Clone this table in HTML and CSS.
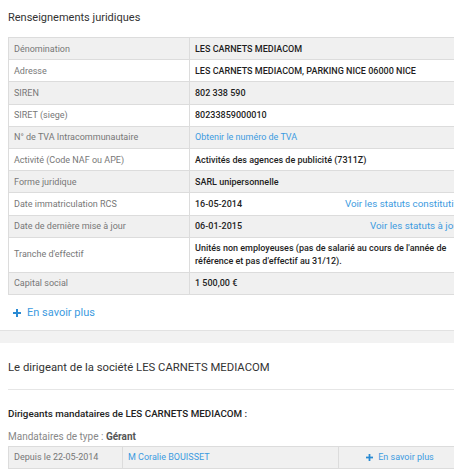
FILE: index.html
```html
<!DOCTYPE html>
<html lang="fr">
<head>
<meta charset="utf-8">
<title>Renseignements juridiques</title>
<link rel="stylesheet" href="styles.css">
</head>
<body>
<div class="page">
  <section class="block">
    <h2 class="title">Renseignements juridiques</h2>
    <table class="info">
      <tr><td class="lab">Dénomination</td><td class="val">LES CARNETS MEDIACOM</td></tr>
      <tr><td class="lab">Adresse</td><td class="val">LES CARNETS MEDIACOM, PARKING NICE 06000 NICE</td></tr>
      <tr><td class="lab">SIREN</td><td class="val">802 338 590</td></tr>
      <tr><td class="lab">SIRET (siege)</td><td class="val">80233859000010</td></tr>
      <tr><td class="lab">N° de TVA Intracommunautaire</td><td class="val"><a class="link">Obtenir le numéro de TVA</a></td></tr>
      <tr><td class="lab">Activité (Code NAF ou APE)</td><td class="val">Activités des agences de publicité (7311Z)</td></tr>
      <tr><td class="lab">Forme juridique</td><td class="val">SARL unipersonnelle</td></tr>
      <tr><td class="lab">Date immatriculation RCS</td><td class="val"><div class="split"><span>16-05-2014</span><a class="link doc">Voir les statuts constitutifs</a></div></td></tr>
      <tr><td class="lab">Date de dernière mise à jour</td><td class="val"><div class="split"><span>06-01-2015</span><a class="link doc">Voir les statuts à jour</a></div></td></tr>
      <tr class="tall"><td class="lab">Tranche d'effectif</td><td class="val">Unités non employeuses (pas de salarié au cours de l'année de<br>référence et pas d'effectif au 31/12).</td></tr>
      <tr><td class="lab">Capital social</td><td class="val">1 500,00 €</td></tr>
    </table>
    <a class="more"><svg class="plus" viewBox="0 0 8 8" width="8" height="8"><rect x="3" y="0" width="2" height="8"/><rect x="0" y="3" width="8" height="2"/></svg>En savoir plus</a>
  </section>
</div>
<div class="band"></div>
<div class="page">
  <section class="block">
    <h2 class="title2">Le dirigeant de la société LES CARNETS MEDIACOM</h2>
    <div class="rule"></div>
    <p class="sub">Dirigeants mandataires de LES CARNETS MEDIACOM :</p>
    <p class="type">Mandataires de type : <b>Gérant</b></p>
    <table class="mand">
      <tr>
        <td class="c1">Depuis le 22-05-2014</td>
        <td class="c2"><a class="link">M Coralie BOUISSET</a></td>
        <td class="c3"><a class="link small-more"><svg class="plus" viewBox="0 0 8 8" width="7" height="7"><rect x="3" y="0" width="2" height="8"/><rect x="0" y="3" width="8" height="2"/></svg>En savoir plus</a></td>
      </tr>
    </table>
  </section>
</div>
</body>
</html>
```

FILE: styles.css
```css
html, body {
  margin: 0;
  padding: 0;
  overflow: hidden;
  background: #fff;
}
body {
  font-family: Roboto, "Liberation Sans", sans-serif;
  color: #222;
  width: 454px;
}
.page {
  padding-left: 8px;
  width: 468px;
}
.block {
  width: 460px;
}
.title {
  margin: 0;
  padding-top: 8px;
  font-size: 11px;
  line-height: 20px;
  font-weight: 400;
  color: #333;
  margin-bottom: 9px;
}
.info {
  width: 460px;
  border-collapse: collapse;
  font-size: 9px;
}
.info td {
  border: 1px solid #dcdcdc;
  height: 22.2px;
  padding: 0 5px;
  line-height: 12px;
  box-sizing: border-box;
}
.info tr:nth-child(odd) td {
  background: #f0f0f0;
}
.info .lab {
  width: 181px;
  color: #777;
}
.info .val {
  color: #1e1e1e;
  font-weight: 500;
}
.info .tall td {
  height: 35px;
  line-height: 12.4px;
}
.link {
  color: #3c9be0;
  font-weight: 400;
  text-decoration: none;
}
.doc {
  font-size: 9.8px;
}
.split {
  display: flex;
  justify-content: space-between;
  align-items: center;
}
.more {
  display: flex;
  align-items: center;
  gap: 6px;
  margin-top: 11px;
  padding-left: 5px;
  font-size: 11px;
  line-height: 14px;
  color: #3c9be0;
}
.plus {
  fill: #2a8ad3;
  flex: none;
}
.band {
  margin-top: 10px;
  height: 12px;
  background: #f2f2f2;
  border-top: 1px solid #e2e2e2;
}
.title2 {
  margin: 0;
  padding-top: 17px;
  font-size: 11.3px;
  line-height: 16px;
  font-weight: 400;
  color: #333;
}
.rule {
  margin-top: 13px;
  height: 1px;
  background: #e6e6e6;
}
.sub {
  margin: 17px 0 0;
  font-size: 9.8px;
  line-height: 14px;
  font-weight: 500;
  color: #222;
}
.type {
  margin: 9px 0 0;
  font-size: 10px;
  line-height: 14px;
  color: #888;
}
.type b {
  color: #555;
  font-weight: 700;
}
.mand {
  margin-top: 2px;
  width: 454px;
  border-collapse: collapse;
  font-size: 9px;
}
.mand td {
  background: #f0f0f0;
  border: 1px solid #dcdcdc;
  height: 22px;
  padding: 0 5px;
  box-sizing: border-box;
}
.mand .c1 {
  width: 114px;
  color: #777;
}
.mand .c2 {
  width: 216px;
}
.mand .c3 {
  text-align: center;
}
.small-more {
  display: inline-flex;
  align-items: center;
  gap: 5px;
}
```
